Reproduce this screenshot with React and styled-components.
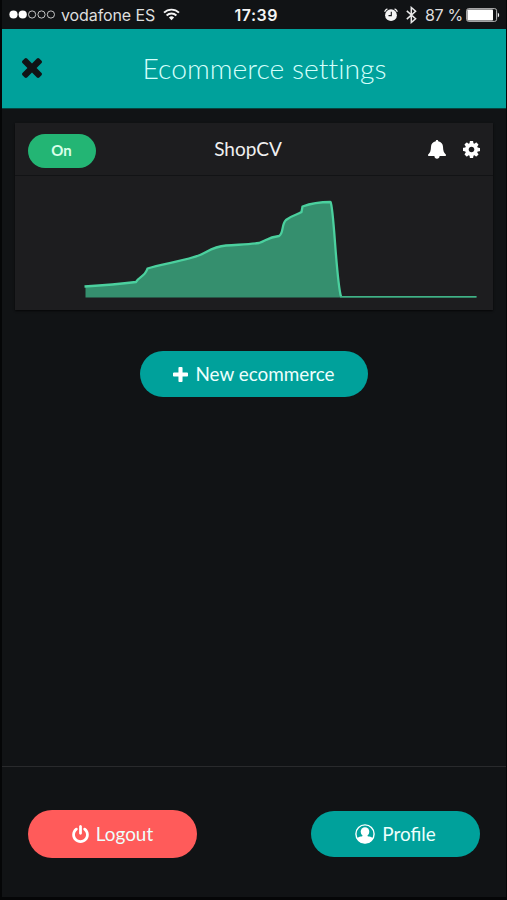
import React from "react"
import styled, { createGlobalStyle } from "styled-components"

const GlobalStyle = createGlobalStyle`
  * {
    box-sizing: border-box;
  }
  body {
    margin: 0;
    background: #111315;
  }
  button {
    border: 0;
    padding: 0;
    background: none;
    font-family: inherit;
    cursor: pointer;
  }
  svg {
    display: block;
    flex-shrink: 0;
  }
`

const CrossIcon = () => (
  <svg width="20" height="20" viewBox="302 366 1188 1188" fill="#111315">
    <path d="M1490 1322q0 40-28 68l-136 136q-28 28-68 28t-68-28l-294-294-294 294q-28 28-68 28t-68-28l-136-136q-28-28-28-68t28-68l294-294-294-294q-28-28-28-68t28-68l136-136q28-28 68-28t68 28l294 294 294-294q28-28 68-28t68 28l136 136q28 28 28 68t-28 68l-294 294 294 294q28 28 28 68z" />
  </svg>
)

const PlusIcon = () => (
  <svg width="15" height="15" viewBox="192 128 1408 1408" fill="#fff">
    <path d="M1600 736v192q0 40-28 68t-68 28h-416v416q0 40-28 68t-68 28h-192q-40 0-68-28t-28-68v-416h-416q-40 0-68-28t-28-68v-192q0-40 28-68t68-28h416v-416q0-40 28-68t68-28h192q40 0 68 28t28 68v416h416q40 0 68 28t28 68z" />
  </svg>
)

const PowerIcon = () => (
  <svg width="17" height="18" viewBox="128 0 1536 1664" fill="#fff">
    <path d="M1664 896q0 156-61 298t-164 245-245 164-298 61-298-61-245-164-164-245-61-298q0-182 80.5-343t226.5-270q43-32 95.5-25t83.5 50q32 42 24.5 94.5t-49.5 84.5q-98 74-151.5 181t-53.5 228q0 104 40.5 198.5t109.5 163.5 163.5 109.5 198.5 40.5 198.5-40.5 163.5-109.5 109.5-163.5 40.5-198.5q0-121-53.5-228t-151.5-181q-42-32-49.5-84.5t24.5-94.5q31-43 84-50t95 25q146 109 226.5 270t80.5 343zm-640-768v640q0 52-38 90t-90 38-90-38-38-90v-640q0-52 38-90t90-38 90 38 38 90z" />
  </svg>
)

const GearIcon = () => (
  <svg width="17" height="17" viewBox="0 128 1536 1536" fill="#fff">
    <path d="M1024 896q0-106-75-181t-181-75-181 75-75 181 75 181 181 75 181-75 75-181zm512-109v222q0 12-8 23t-20 13l-185 28q-19 54-39 91 35 50 107 138 10 12 10 25t-9 23q-27 37-99 108t-94 71q-12 0-26-9l-138-108q-44 23-91 38-16 136-29 186-7 28-36 28h-222q-14 0-24.5-8.5t-11.5-21.5l-28-184q-49-16-90-37l-141 107q-10 9-25 9-14 0-25-11-126-114-165-168-7-10-7-23 0-12 8-23 15-21 51-66.5t54-70.5q-27-50-41-99l-183-27q-13-2-21-12.5t-8-23.5v-222q0-12 8-23t19-13l186-28q14-46 39-92-40-57-107-138-10-12-10-24 0-10 9-23 26-36 98.5-107.5t94.5-71.5q13 0 26 10l138 107q44-23 91-38 16-136 29-186 7-28 36-28h222q14 0 24.5 8.5t11.5 21.5l28 184q49 16 90 37l142-107q9-9 24-9 13 0 25 10 129 119 165 170 7 8 7 22 0 12-8 23-15 21-51 66.5t-54 70.5q26 50 41 98l183 28q13 2 21 12.5t8 23.5z" />
  </svg>
)

const BellIcon = () => (
  <svg width="18" height="19" viewBox="0 0 18 19" fill="#fff">
    <path d="M9 0c.8 0 1.2.5 1.200 1.200 3 .6 4.700 2.700 4.800 5.500.1 4 .8 5.800 2.800 7.700.6.6.3 1.500-.5 1.500H11.600C11.500 17.700 10.500 18.700 9 18.700S6.500 17.700 6.400 15.900H.7c-.8 0-1.100-.9-.5-1.500C2.200 12.500 2.900 10.700 3 6.700c.1-2.800 1.800-4.900 4.800-5.500C7.800.5 8.200 0 9 0z" />
  </svg>
)

const ProfileIcon = () => (
  <svg width="20" height="20" viewBox="0 0 20 20">
    <circle cx="10" cy="10" r="9.100" fill="none" stroke="#fff" strokeWidth="1.400" />
    <ellipse cx="10" cy="7.800" rx="4.300" ry="4.600" fill="#fff" />
    <path
      fill="#fff"
      d="M7.700 11h4.600c-.1 1.200.7 1.300 2 1.600 1.500.3 3 .8 3.800 1.800A9.200 9.200 0 0 1 10 19.300a9.200 9.200 0 0 1-8.100-4.900c.8-1 2.300-1.500 3.800-1.800 1.300-.3 2.100-.4 2-1.600z"
    />
  </svg>
)

const SignalDots = () => (
  <svg width="47" height="9" viewBox="0 0 47 9">
    {[4.5, 13.7, 23.1, 32.5, 41.9].map((cx, i) => (
      <circle
        key={cx}
        cx={cx}
        cy="4.5"
        r={i < 2 ? 4.1 : 3.6}
        fill={i < 2 ? "#fff" : "none"}
        stroke={i < 2 ? "none" : "#d8d8d8"}
        strokeWidth="0.9"
      />
    ))}
  </svg>
)

const WifiIcon = () => (
  <svg width="17" height="13" viewBox="0 0 17 13" fill="none" stroke="#f4f4f4" strokeWidth="1.9">
    <path d="M1 4.700a10.600 10.600 0 0 1 15 0" />
    <path d="M3.600 7.500a6.900 6.900 0 0 1 9.800 0" />
    <path d="M8.500 12.200L5.900 9.600a3.700 3.700 0 0 1 5.200 0z" fill="#f4f4f4" stroke="none" />
  </svg>
)

const AlarmIcon = () => (
  <svg width="14" height="14" viewBox="0 0 14 14">
    <path d="M.6 3.700A5 5 0 0 1 3.400.9M10.600.9a5 5 0 0 1 2.800 2.800" fill="none" stroke="#f4f4f4" strokeWidth="1.200" />
    <circle cx="7" cy="7.200" r="5.900" fill="#f4f4f4" />
    <path d="M7.300 3.700v3.900H4.500" fill="none" stroke="#111315" strokeWidth="1.100" />
  </svg>
)

const BluetoothIcon = () => (
  <svg width="11" height="18" viewBox="0 0 11 18" fill="none" stroke="#e8e8e8" strokeWidth="1.500">
    <path d="M.8 4.900l8.800 7.900-4.300 3.700V1.500l4.300 3.700L.8 13.100" />
  </svg>
)

const BatteryIcon = () => (
  <svg width="34" height="14" viewBox="0 0 34 14">
    <rect x="0.600" y="0.600" width="30" height="12.800" rx="2" fill="none" stroke="#c8c8c8" strokeWidth="0.900" />
    <rect x="1.400" y="1.500" width="25.600" height="11" rx="0.800" fill="#fff" />
    <path d="M31.800 4.700c1.800.6 1.800 4 0 4.600z" fill="#f4f4f4" />
  </svg>
)

const SalesChart = () => (
  <svg width="478" height="134" viewBox="15 176 478 134">
    <path
      fill="#358f6e"
      d="M85.500 286.500C103 285.500 121 284 136 282C138 277 145 277 147.500 268.500C160 264 187 260.500 200 255C208 251.500 213 246.500 226 245.500C240 244.500 249 244.500 259 243C267 240 268 237.500 279 236C284 233 281 225 286 220C292 215 297 215 301.500 212L302.500 206.500C312 203 319 202 330.500 202C334 207 336 280 341 296.500H476.500V297.500H85.500Z"
    />
    <path
      fill="none"
      stroke="#4bd09e"
      strokeWidth="2.300"
      strokeLinejoin="round"
      d="M84.500 286.500C103 285.500 121 284 136 282C138 277 145 277 147.500 268.500C160 264 187 260.500 200 255C208 251.500 213 246.500 226 245.500C240 244.500 249 244.500 259 243C267 240 268 237.500 279 236C284 233 281 225 286 220C292 215 297 215 301.500 212L302.500 206.500C312 203 319 202 330.500 202C334 207 336 280 341 296.500"
    />
    <path stroke="#40b387" strokeWidth="1.500" d="M340 296.800H476.500" />
  </svg>
)

const App = () => {
  return (
    <Screen>
      <GlobalStyle />
      <StatusBar>
        <Carrier>
          <SignalDots />
          <span>vodafone ES</span>
          <WifiIcon />
        </Carrier>
        <Clock>17:39</Clock>
        <Indicators>
          <AlarmIcon />
          <BluetoothIcon />
          <span>87 %</span>
          <BatteryIcon />
        </Indicators>
      </StatusBar>
      <Header>
        <button aria-label="Close">
          <CrossIcon />
        </button>
        <h1>Ecommerce settings</h1>
      </Header>
      <Content>
        <Card>
          <CardHeader>
            <Toggle>On</Toggle>
            <h2>ShopCV</h2>
            <Actions>
              <button aria-label="Notifications">
                <BellIcon />
              </button>
              <button aria-label="Settings">
                <GearIcon />
              </button>
            </Actions>
          </CardHeader>
          <SalesChart />
        </Card>
        <PillButton $width={228} $height={46}>
          <PlusIcon />
          <span>New ecommerce</span>
        </PillButton>
      </Content>
      <Footer>
        <PillButton $width={169} $height={48} $color="#ff5b5a">
          <PowerIcon />
          <span>Logout</span>
        </PillButton>
        <PillButton $width={169} $height={46}>
          <ProfileIcon />
          <span>Profile</span>
        </PillButton>
      </Footer>
    </Screen>
  )
}

const Screen = styled.div`
  display: flex;
  flex-direction: column;
  width: 507px;
  height: 900px;
  overflow: hidden;
  border: solid #050607;
  border-width: 0 1px 3px 2px;
  background: #111315;
  color: white;
  font-family: Lato, "Liberation Sans", sans-serif;
`

const StatusBar = styled.div`
  display: grid;
  grid-template-columns: 1fr 46px 1fr;
  align-items: center;
  height: 29px;
  padding: 0 6px 0 7px;
  font-family: Inter, "Liberation Sans", sans-serif;
  font-size: 16px;
  color: #dedede;
`

const Carrier = styled.div`
  display: flex;
  align-items: center;
  gap: 5px;
  white-space: nowrap;
  span {
    width: 95px;
    letter-spacing: -0.1px;
  }
  svg:last-child {
    margin-left: 2px;
  }
`

const Clock = styled.div`
  padding-left: 3px;
  text-align: center;
  font-weight: 600;
  letter-spacing: 0.5px;
  color: #f4f4f4;
  white-space: nowrap;
`

const Indicators = styled.div`
  display: flex;
  align-items: center;
  justify-content: flex-end;
  gap: 8px;
  white-space: nowrap;
  span {
    width: 37px;
    letter-spacing: -0.3px;
  }
  svg:last-child {
    margin-left: -4px;
  }
`

const Header = styled.header`
  display: grid;
  grid-template-columns: 20px 1fr 0;
  align-items: center;
  height: 80px;
  padding: 0 0 1px 20px;
  border-bottom: 1px solid #06433f;
  background: #00a19b;
  h1 {
    margin: 0;
    padding: 0 19px 0 0;
    text-align: center;
    font-size: 28.3px;
    font-weight: 300;
    font-variant-ligatures: none;
    color: #d5fffb;
  }
`

const Content = styled.main`
  display: flex;
  flex: 1;
  flex-direction: column;
  align-items: center;
  gap: 41px;
  padding-top: 14px;
`

const Card = styled.section`
  width: 478px;
  height: 187px;
  background: #1d1d1f;
  box-shadow: 0 1px 2px rgba(0, 0, 0, 0.7);
`

const CardHeader = styled.div`
  display: grid;
  grid-template-columns: 68px 1fr 68px;
  align-items: center;
  height: 53px;
  padding: 0 13px;
  border-bottom: 1px solid #121315;
  h2 {
    margin: 0;
    padding: 0 12px 2px 0;
    text-align: center;
    font-size: 19px;
    font-weight: 400;
    color: #f0f0f0;
  }
`

const Toggle = styled.button`
  height: 34px;
  margin-top: 4px;
  padding: 0 1px 2px 0;
  border-radius: 17px;
  background: #23b574;
  color: #d9ffe9;
  font-size: 15px;
  font-weight: 700;
`

const Actions = styled.div`
  display: flex;
  align-items: center;
  justify-content: flex-end;
  gap: 17px;
`

const PillButton = styled.button`
  display: flex;
  align-items: center;
  justify-content: center;
  gap: 7px;
  width: ${({ $width }) => $width}px;
  height: ${({ $height }) => $height}px;
  border-radius: 24px;
  background: ${({ $color }) => $color || "#00a19b"};
  color: #edfffd;
  font-size: 18.9px;
  span {
    padding-bottom: 2px;
  }
`

const Footer = styled.footer`
  display: flex;
  align-items: center;
  justify-content: space-between;
  height: 131px;
  padding: 4px 26px 0;
  border-top: 1px solid #292a2c;
`

export default App
